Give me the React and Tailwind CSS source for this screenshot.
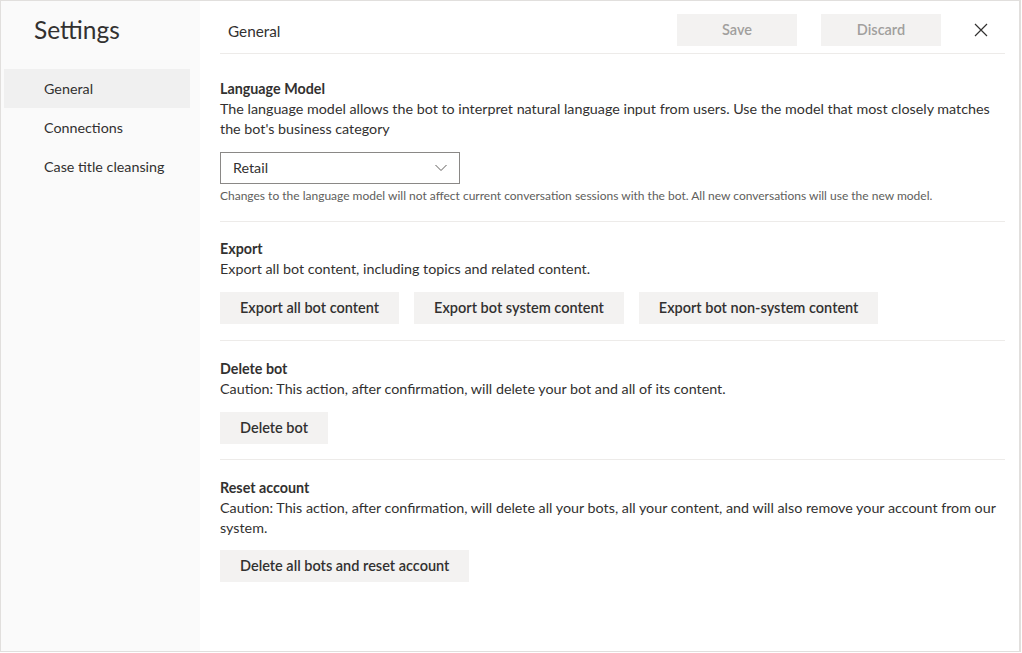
import React, { useState } from 'react';

const font = { fontFamily: '"Segoe UI", Lato, "Noto Sans", sans-serif' };

const navItems = ['General', 'Connections', 'Case title cleansing'];

const ActionButton = ({ children }) => (
  <button className="h-[32px] px-[20px] bg-[#f3f2f1] text-[14.5px] font-semibold text-[#323130] whitespace-nowrap">
    {children}
  </button>
);

const Section = ({ title, className, children }) => (
  <div className={`border-b border-[#edebe9] ${className}`}>
    <div className="text-[14.3px] leading-[20px] font-bold text-[#323130]">{title}</div>
    {children}
  </div>
);

export default function App() {
  const [active, setActive] = useState('General');

  return (
    <div className="w-[1022px] h-[653px] bg-white" style={font}>
      <div className="flex w-[1021px] h-[652px] border border-r-[2px] border-[#e1dfdd]">
        {/* Sidebar */}
        <div className="w-[199px] shrink-0 bg-[#fafafa] flex flex-col">
          <div className="pl-[33px] pt-[13px] h-[68px] text-[24.5px] leading-[32px] text-[#323130]">Settings</div>
          <ul className="px-[3px] mr-[7px]">
            {navItems.map((item) => (
              <li
                key={item}
                onClick={() => setActive(item)}
                className={`h-[39px] flex items-center pl-[40px] text-[14.3px] text-[#323130] cursor-pointer ${active === item ? 'bg-[#f0f0f0]' : ''}`}
              >
                {item}
              </li>
            ))}
          </ul>
        </div>

        {/* Main */}
        <div className="flex-1 pl-[20px] pr-[14px]">
          <div className="h-[53px] flex items-start pt-[13px] border-b border-[#edebe9]">
            <div className="pl-[8px] pt-[7px] text-[15.3px] leading-[20px] text-[#323130] flex-1">General</div>
            <button className="w-[120px] h-[32px] bg-[#f3f2f1] text-[14.5px] font-semibold text-[#a19f9d]">Save</button>
            <button className="ml-[24px] w-[120px] h-[32px] bg-[#f3f2f1] text-[14.5px] font-semibold text-[#a19f9d]">Discard</button>
            <button className="ml-[28px] mr-[12px] w-[24px] h-[32px] flex items-center justify-center text-[#323130]">
              <svg width="14" height="14" viewBox="0 0 14 14" fill="none" stroke="currentColor" strokeWidth="1.2">
                <path d="M1 1L13 13M13 1L1 13" />
              </svg>
            </button>
          </div>

          <Section title="Language Model" className="pt-[25px] pb-[17px]">
            <p className="text-[14.3px] leading-[20px] text-[#323130]">
              The language model allows the bot to interpret natural language input from users. Use the model that most closely matches the bot's business category
            </p>
            <div className="mt-[13px] w-[240px] h-[32px] border border-[#8a8886] flex items-center justify-between pl-[12px] pr-[12px] text-[14.3px] text-[#323130]">
              <span>Retail</span>
              <svg width="12" height="8" viewBox="0 0 12 8" fill="none" stroke="#605e5c" strokeWidth="1">
                <path d="M0.5 1L6 6.5L11.5 1" />
              </svg>
            </div>
            <p className="mt-[4px] text-[12px] leading-[16px] text-[#605e5c]">
              Changes to the language model will not affect current conversation sessions with the bot. All new conversations will use the new model.
            </p>
          </Section>

          <Section title="Export" className="pt-[17px] pb-[16px]">
            <p className="text-[14.3px] leading-[20px] text-[#323130]">Export all bot content, including topics and related content.</p>
            <div className="mt-[13px] flex gap-[15px]">
              <ActionButton>Export all bot content</ActionButton>
              <ActionButton>Export bot system content</ActionButton>
              <ActionButton>Export bot non-system content</ActionButton>
            </div>
          </Section>

          <Section title="Delete bot" className="pt-[18px] pb-[15px]">
            <p className="text-[14.3px] leading-[20px] text-[#323130]">Caution: This action, after confirmation, will delete your bot and all of its content.</p>
            <div className="mt-[13px] flex">
              <ActionButton>Delete bot</ActionButton>
            </div>
          </Section>

          <div className="pt-[18px]">
            <div className="text-[14.3px] leading-[20px] font-bold text-[#323130]">Reset account</div>
            <p className="text-[14.3px] leading-[20px] text-[#323130]">
              Caution: This action, after confirmation, will delete all your bots, all your content, and will also remove your account from our system.
            </p>
            <div className="mt-[12px] flex">
              <ActionButton>Delete all bots and reset account</ActionButton>
            </div>
          </div>
        </div>
      </div>
    </div>
  );
}
